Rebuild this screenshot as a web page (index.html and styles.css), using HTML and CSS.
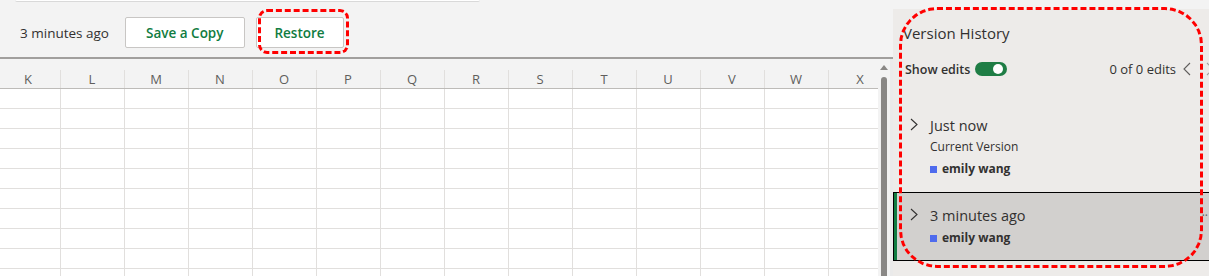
FILE: index.html
```
<!DOCTYPE html>
<html>
<head>
    <title>Version History</title>
    <link rel="stylesheet" href="styles.css">
</head>
<body>
    <div class="app">
        <div class="main">
            <div class="searchbox"></div>
            <div class="toolbar">
                <span class="stamp">3 minutes ago</span>
                <button class="btn">Save a Copy</button>
                <button class="btn restore">Restore<span class="mark mark-restore"></span></button>
            </div>

            <div class="sheet">
                <div class="grid">
                    <div class="col-head">
                        <span>K</span><span>L</span><span>M</span><span>N</span><span>O</span>
                        <span>P</span><span>Q</span><span>R</span><span>S</span><span>T</span>
                        <span>U</span><span>V</span><span>W</span><span>X</span>
                    </div>
                    <div class="cells"></div>
                </div>
                <div class="scrollbar">
                    <span class="arrow-up"></span>
                    <span class="thumb"></span>
                </div>
            </div>
        </div>

        <aside class="history">
            <span class="mark mark-panel"></span>
            <h2 class="history-title">Version History</h2>

            <div class="edits-row">
                <span class="edits-label">Show edits</span>
                <span class="toggle"><span class="knob"></span></span>
                <span class="edits-count">0 of 0 edits</span>
                <span class="nav">
                    <svg width="8" height="14" viewBox="0 0 8 14"><polyline points="7,1 1,7 7,13" fill="none" stroke="#605e5c" stroke-width="1.1"/></svg>
                    <svg width="8" height="14" viewBox="0 0 8 14"><polyline points="1,1 7,7 1,13" fill="none" stroke="#a19f9d" stroke-width="1.1"/></svg>
                </span>
            </div>

            <div class="version current">
                <svg class="chev" width="8" height="13" viewBox="0 0 8 13"><polyline points="1,1 7,6.5 1,12" fill="none" stroke="#323130" stroke-width="1.1"/></svg>
                <div class="version-body">
                    <div class="version-time">Just now</div>
                    <div class="version-note">Current Version</div>
                    <div class="author"><span class="swatch"></span>emily wang</div>
                </div>
            </div>

            <div class="version selected">
                <svg class="chev" width="8" height="13" viewBox="0 0 8 13"><polyline points="1,1 7,6.5 1,12" fill="none" stroke="#323130" stroke-width="1.1"/></svg>
                <div class="version-body">
                    <div class="version-time">3 minutes ago</div>
                    <div class="author"><span class="swatch"></span>emily wang</div>
                </div>
                <span class="more">··</span>
            </div>
        </aside>
    </div>
</body>
</html>
```

FILE: styles.css
```
body {
    margin: 0;
    padding: 0;
    width: 1209px;
    height: 276px;
    overflow: hidden;
    font-family: "Open Sans", "Noto Sans", Arial, sans-serif;
    color: #323130;
    background-color: #f3f3f3;
}

.app {
    display: flex;
    height: 276px;
}

/* left side: toolbar + sheet */

.main {
    width: 893px;
    flex-shrink: 0;
    display: flex;
    flex-direction: column;
}

.searchbox {
    margin-left: 15px;
    width: 465px;
    height: 1px;
    background-color: #fff;
    border-bottom: 1px solid #d9d9d9;
    border-radius: 0 0 4px 4px;
}

.toolbar {
    display: flex;
    align-items: center;
    height: 31px;
    padding: 15px 0 9px 20px;
    border-bottom: 2px solid #a19f9d;
}

.stamp {
    font-size: 13.5px;
    margin-right: 16px;
}

.btn {
    position: relative;
    height: 31px;
    padding: 0 20px;
    background-color: #fff;
    border: 1px solid #c8c6c4;
    border-radius: 2px;
    font-family: inherit;
    font-size: 13.5px;
    font-weight: 600;
    color: #107c41;
}

.btn.restore {
    margin-left: 11px;
    width: 88px;
    padding: 0;
}

.mark {
    position: absolute;
    box-sizing: border-box;
    border: 3px dashed #ff0000;
    pointer-events: none;
}

.mark-restore {
    left: 1px;
    top: -9px;
    width: 91px;
    height: 45px;
    border-radius: 9px;
}

.sheet {
    flex: 1;
    display: flex;
}

.grid {
    width: 878px;
    overflow: hidden;
    display: flex;
    flex-direction: column;
}

.col-head {
    display: flex;
    height: 29px;
    margin-left: -4px;
    border-bottom: 1px solid #bdbbb8;
    background: linear-gradient(to right, #e1dfdd 1px, transparent 1px) 64px 11px / 64px 18px repeat-x;
}

.col-head span {
    flex: 0 0 64px;
    text-align: center;
    font-size: 13px;
    line-height: 20px;
    padding-top: 10px;
    color: #605e5c;
}

.cells {
    flex: 1;
    background-color: #fff;
    background-image:
        linear-gradient(to right, #e1dfdd 1px, transparent 1px),
        linear-gradient(to bottom, #e1dfdd 1px, transparent 1px);
    background-size: 64px 100%, 100% 20px;
    background-position: 60px 0, 0 19px;
}

.scrollbar {
    width: 12px;
    border-right: 3px solid #eaeaea;
    background-color: #f3f3f3;
    display: flex;
    flex-direction: column;
    align-items: center;
}

.arrow-up {
    margin-top: 6px;
    width: 0;
    height: 0;
    border-left: 4px solid transparent;
    border-right: 4px solid transparent;
    border-bottom: 5px solid #8a8886;
}

.thumb {
    margin-top: 7px;
    width: 6px;
    flex: 1;
    background-color: #8a8886;
    border-radius: 3px 3px 0 0;
}

/* right side: version history panel */

.history {
    position: relative;
    width: 330px;
    flex-shrink: 0;
    margin-top: 9px;
    background-color: #edebe9;
}

.mark-panel {
    left: 6px;
    top: -2px;
    width: 304px;
    height: 261px;
    border-radius: 38px;
    z-index: 2;
}

.history-title {
    margin: 14px 0 0 10px;
    font-size: 15px;
    font-weight: 400;
    line-height: 20px;
}

.edits-row {
    display: flex;
    align-items: center;
    height: 20px;
    margin-top: 16px;
    padding-left: 12px;
    font-size: 12.5px;
}

.edits-label {
    font-weight: 600;
}

.toggle {
    position: relative;
    margin-left: 5px;
    width: 32px;
    height: 14px;
    border-radius: 7px;
    background-color: #1f7d45;
}

.knob {
    position: absolute;
    right: 4px;
    top: 2px;
    width: 10px;
    height: 10px;
    border-radius: 50%;
    background-color: #fff;
}

.edits-count {
    margin-left: auto;
    font-size: 13px;
}

.nav {
    display: flex;
    gap: 15px;
    margin-left: 7px;
    margin-right: 9px;
}

.version {
    display: flex;
    align-items: flex-start;
    box-sizing: border-box;
    padding-left: 17px;
}

.version.current {
    margin-top: 35px;
    height: 78px;
}

.chev {
    margin-top: 4px;
    margin-right: 12px;
}

.version-time {
    font-size: 14.5px;
    line-height: 24px;
}

.version-note {
    font-size: 12px;
    line-height: 18px;
}

.author {
    display: flex;
    align-items: center;
    font-size: 12px;
    font-weight: 700;
    line-height: 18px;
    margin-top: 4px;
}

.swatch {
    width: 7px;
    height: 7px;
    margin-right: 5px;
    background-color: #4f6bed;
}

.version.selected {
    height: 69px;
    padding-top: 11px;
    padding-left: 16px;
    border: 1px solid #000;
    box-shadow: inset 3px 0 0 #107c41;
    background-color: #d2d0ce;
}

.version.selected .author {
    margin-top: 1px;
}

.more {
    margin-left: auto;
    margin-right: 14px;
    font-size: 12px;
    line-height: 24px;
    color: #605e5c;
}
```
